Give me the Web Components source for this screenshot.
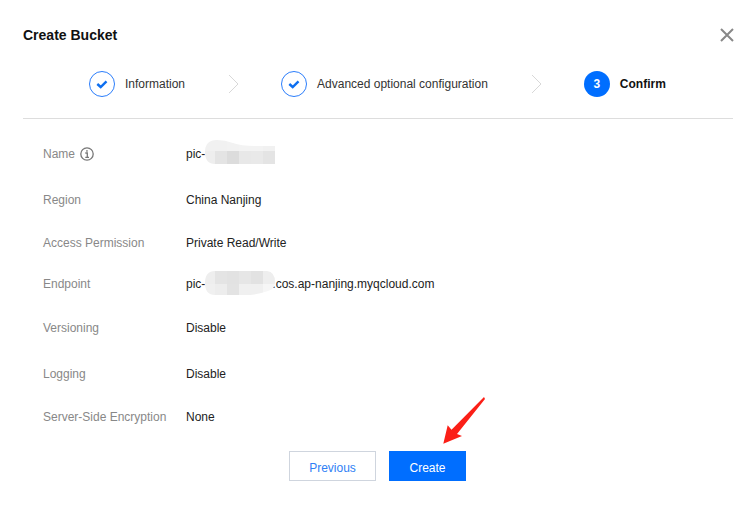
<!DOCTYPE html>
<html>
<head>
<meta charset="utf-8">
<style>
    html, body { margin: 0; background: #fff; }
    body { font-family: "Liberation Sans", Arial, sans-serif; }
</style>
</head>
<body>
<bucket-dialog>
    <span slot="title">Create Bucket</span>
    <wizard-step slot="steps" state="done">Information</wizard-step>
    <wizard-step slot="steps" state="done">Advanced optional configuration</wizard-step>
    <wizard-step slot="steps" state="current" num="3">Confirm</wizard-step>

    <info-row slot="rows" label="Name" hint><mosaic-value prefix="pic-" kind="name"></mosaic-value></info-row>
    <info-row slot="rows" label="Region">China Nanjing</info-row>
    <info-row slot="rows" label="Access Permission">Private Read/Write</info-row>
    <info-row slot="rows" label="Endpoint"><mosaic-value prefix="pic-" kind="endpoint" suffix=".cos.ap-nanjing.myqcloud.com"></mosaic-value></info-row>
    <info-row slot="rows" label="Versioning">Disable</info-row>
    <info-row slot="rows" label="Logging">Disable</info-row>
    <info-row slot="rows" label="Server-Side Encryption">None</info-row>

    <flat-button slot="actions">Previous</flat-button>
    <flat-button slot="actions" primary>Create</flat-button>
</bucket-dialog>

<script>
// Dialogo principal
class BucketDialog extends HTMLElement {
    constructor() {
        super();
        this.attachShadow({ mode: 'open' });
        this.shadowRoot.innerHTML = `
            <style>
                :host {
                    display: block;
                    position: relative;
                    width: 753px;
                    height: 510px;
                    box-sizing: border-box;
                    padding: 27px 20px 0 23px;
                    overflow: hidden;
                    color: #000;
                }
                .head {
                    display: flex;
                    justify-content: space-between;
                    align-items: center;
                    height: 16px;
                    font-size: 14px;
                    font-weight: bold;
                    color: #111;
                }
                .head svg { display: block; margin-right: -1px; }
                .steps {
                    display: flex;
                    align-items: center;
                    height: 26px;
                    margin-top: 28px;
                    padding-left: 66px;
                }
                .divider {
                    height: 1px;
                    background: #dddddd;
                    margin-top: 21px;
                }
                .rows {
                    display: grid;
                    grid-template-rows: 46px 43px 41px 44px 46px 43px 20px;
                    margin-top: 25px;
                    align-items: start;
                }
                .actions {
                    display: flex;
                    justify-content: center;
                    gap: 13px;
                    margin-top: 24px;
                    padding-right: 2px;
                }
                .arrow { position: absolute; left: 440px; top: 394px; }
            </style>
            <div class="head">
                <slot name="title"></slot>
                <svg width="14" height="14" viewBox="0 0 14 14"><path d="M1 1L13 13M13 1L1 13" stroke="#888" stroke-width="2" fill="none"/></svg>
            </div>
            <div class="steps"><slot name="steps"></slot></div>
            <div class="divider"></div>
            <div class="rows"><slot name="rows"></slot></div>
            <div class="actions"><slot name="actions"></slot></div>
            <svg class="arrow" width="50" height="54" viewBox="0 0 50 54">
                <path d="M44 3L11.500 35.800L7.700 31.300L3.300 49.700L22 42L17 39.900L45 5Z" fill="#fb1f17"/>
            </svg>
        `;
    }
}

// Paso del asistente
class WizardStep extends HTMLElement {
    constructor() {
        super();
        this.attachShadow({ mode: 'open' });
        const current = this.getAttribute('state') === 'current';
        const badge = current
            ? `<span class="num">${this.getAttribute('num')}</span>`
            : `<svg width="26" height="26" viewBox="0 0 26 26"><circle cx="13" cy="13" r="12.500" fill="none" stroke="#2b7dfb"/><path d="M8.300 13L11.700 16L17.500 10.300" fill="none" stroke="#0e6ff0" stroke-width="2.400"/></svg>`;
        this.shadowRoot.innerHTML = `
            <style>
                :host { display: flex; align-items: center; font-size: 12px; color: ${current ? '#111' : '#333'}; }
                .num {
                    width: 26px; height: 26px; border-radius: 50%;
                    background: #006eff; color: #fff;
                    font-weight: bold; text-align: center; line-height: 26px;
                }
                svg { display: block; }
                .label { margin-left: 10px; ${current ? 'font-weight: bold;' : ''} }
                .chev { margin-left: 43px; margin-right: 42px; }
            </style>
            ${badge}
            <span class="label"><slot></slot></span>
            ${current ? '' : `<svg class="chev" width="11" height="20" viewBox="0 0 11 20"><path d="M1 1L10 10L1 19" fill="none" stroke="#d8d8d8"/></svg>`}
        `;
    }
}

// Fila de datos
class InfoRow extends HTMLElement {
    constructor() {
        super();
        this.attachShadow({ mode: 'open' });
        const hint = this.hasAttribute('hint')
            ? `<svg width="14" height="14" viewBox="0 0 14 14"><circle cx="7" cy="7" r="6.200" fill="none" stroke="#777" stroke-width="1.300"/><path d="M5.300 6H7.300V10M5.300 10.300H9" fill="none" stroke="#777" stroke-width="1.300"/><rect x="6.200" y="3.200" width="1.500" height="1.500" fill="#777"/></svg>`
            : '';
        this.shadowRoot.innerHTML = `
            <style>
                :host {
                    display: flex;
                    align-items: center;
                    padding-left: 20px;
                    font-size: 12px;
                    line-height: 20px;
                    color: #222;
                }
                .label {
                    display: flex;
                    align-items: center;
                    gap: 5px;
                    width: 143px;
                    flex: none;
                    color: #888;
                }
                svg { display: block; }
            </style>
            <div class="label"><span>${this.getAttribute('label')}</span>${hint}</div>
            <div><slot></slot></div>
        `;
    }
}

// Valor con parte tapada
class MosaicValue extends HTMLElement {
    constructor() {
        super();
        this.attachShadow({ mode: 'open' });
        const endpoint = this.getAttribute('kind') === 'endpoint';
        const xs = [0, 10, 22, 34, 46, 58];
        const ws = [10, 12, 12, 12, 12, 12];
        const row = (y, h, colors) => colors.map((c, i) =>
            `<rect x="${xs[i]}" y="${y}" width="${ws[i]}" height="${h}" fill="${c}"/>`).join('');
        const shape = endpoint
            ? 'M10 0H62Q70 1 70 11Q70 18 63 20Q52 24 40 24H10Q0 24 0 12Q0 0 10 0Z'
            : 'M12 0Q20 0 28 3Q36 6 50 6H70V24H10Q0 24 0 12Q0 0 12 0Z';
        const cells = endpoint
            ? row(0, 13, ['#eeeeee', '#e4e4e4', '#e2e2e2', '#e6e6e6', '#e2e2e2', '#eeeeee'])
              + row(13, 11, ['#f0f0f0', '#ededed', '#e3e3e3', '#f0f0f0', '#f0f0f0', '#f6f6f6'])
            : row(0, 11, ['#f1f1f1', '#f1f1f1', '#f2f2f2', '#f3f3f3', '#f3f3f3', '#f1f1f1'])
              + row(11, 13, ['#eeeeee', '#e4e4e4', '#dcdcdc', '#e8e8e8', '#e9e9e9', '#e4e4e4']);
        const suffix = this.getAttribute('suffix') || '';
        this.shadowRoot.innerHTML = `
            <style>
                :host { display: block; position: relative; white-space: nowrap; }
                .gap { display: inline-block; width: 67px; }
                .cover { position: absolute; left: 19px; top: ${endpoint ? -3 : -4}px; display: block; }
            </style>
            <span>${this.getAttribute('prefix')}</span><span class="gap"></span><span>${suffix}</span>
            <svg class="cover" width="70" height="24" viewBox="0 0 70 24">
                <defs><clipPath id="blob"><path d="${shape}"/></clipPath></defs>
                <g clip-path="url(#blob)">${cells}</g>
            </svg>
        `;
    }
}

// Boton
class FlatButton extends HTMLElement {
    constructor() {
        super();
        this.attachShadow({ mode: 'open' });
        this.shadowRoot.innerHTML = `
            <style>
                :host {
                    display: block;
                    box-sizing: border-box;
                    height: 30px;
                    padding-left: 1px;
                    font-size: 12px;
                    line-height: 32px;
                    text-align: center;
                    border: 1px solid #cfd5de;
                    color: #2f7ff5;
                    background: #fff;
                    width: 87px;
                }
                :host([primary]) {
                    width: 77px;
                    background: #006eff;
                    border-color: #006eff;
                    color: #fff;
                }
            </style>
            <slot></slot>
        `;
    }
}

customElements.define('bucket-dialog', BucketDialog);
customElements.define('wizard-step', WizardStep);
customElements.define('info-row', InfoRow);
customElements.define('mosaic-value', MosaicValue);
customElements.define('flat-button', FlatButton);
</script>
</body>
</html>
